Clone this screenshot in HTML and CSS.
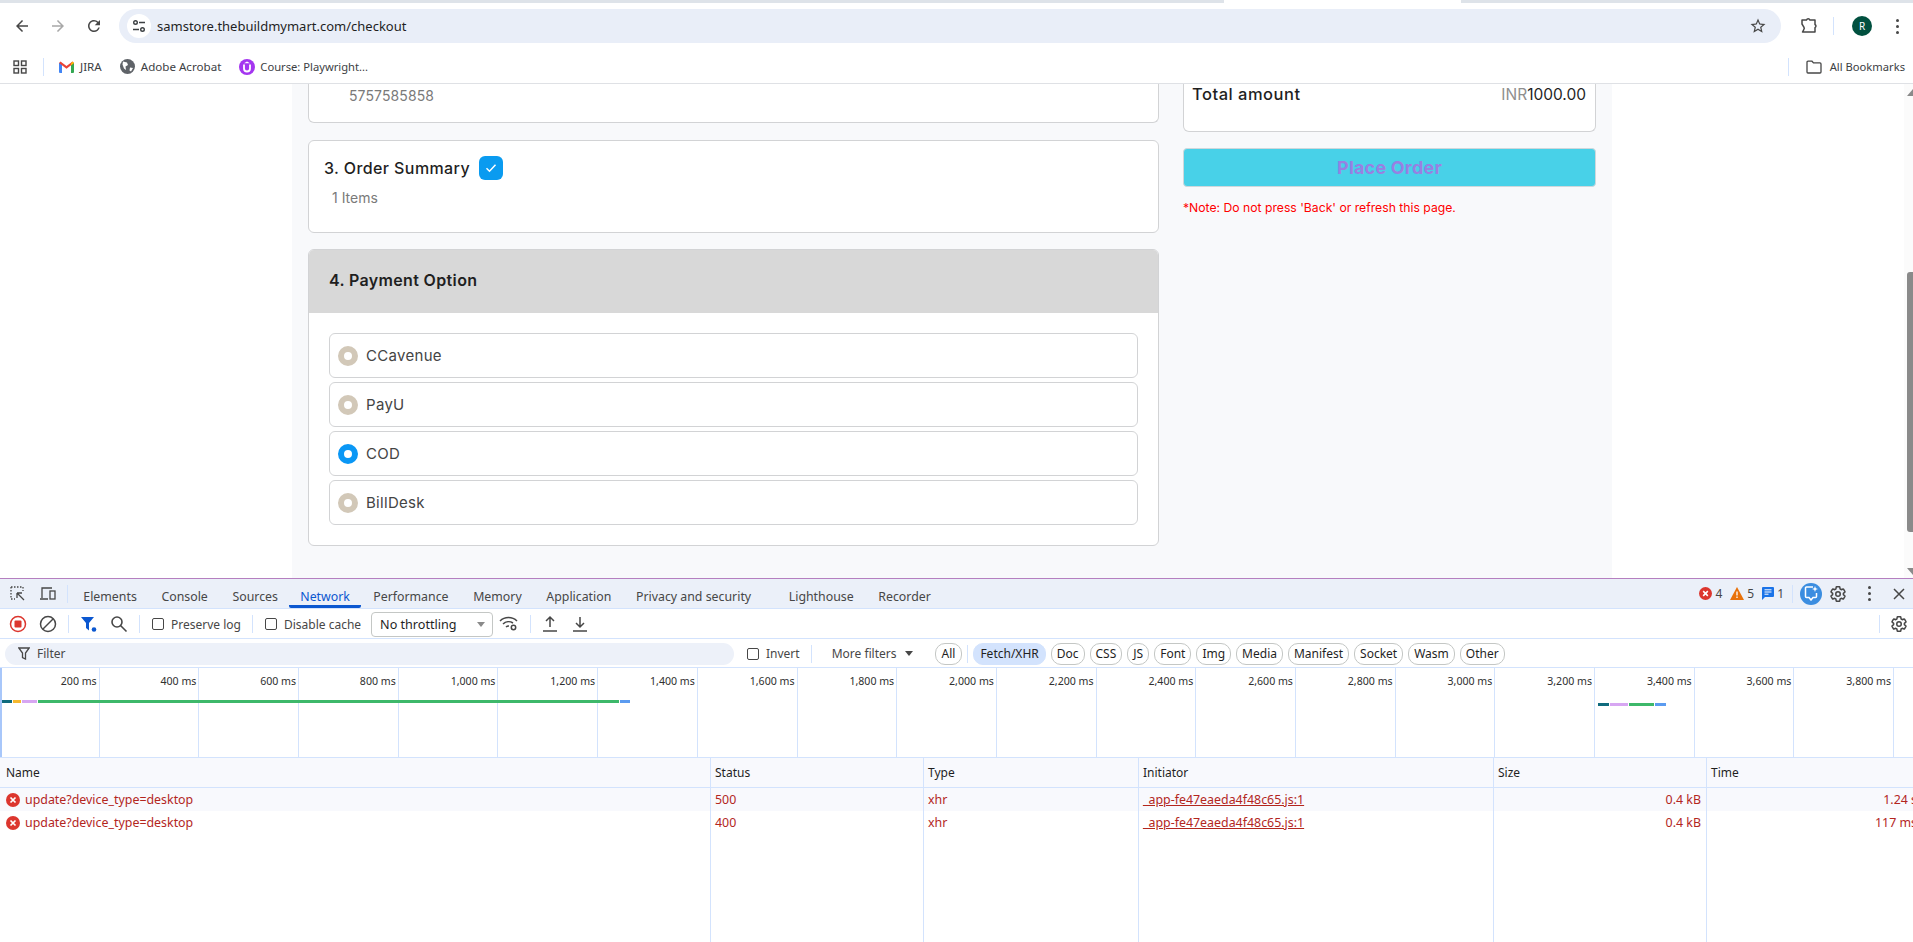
FILE: index.html
```html
<!doctype html>
<html lang="en">
<head>
<meta charset="UTF-8">
<title>Checkout</title>
<link rel="stylesheet" href="styles.css">
</head>
<body>
<svg class="defs" width="0" height="0">
  <symbol id="gear" viewBox="0 0 24 24">
    <path fill="none" stroke="currentColor" stroke-width="2" stroke-linejoin="round" d="M19.14 12.94c.04-.3.06-.61.06-.94 0-.32-.02-.64-.07-.94l2.03-1.58a.49.49 0 0 0 .12-.61l-1.92-3.32a.488.488 0 0 0-.59-.22l-2.39.96c-.5-.38-1.03-.7-1.62-.94l-.36-2.54a.484.484 0 0 0-.48-.41h-3.84c-.24 0-.43.17-.47.41l-.36 2.54c-.59.24-1.13.57-1.62.94l-2.39-.96c-.22-.08-.47 0-.59.22L2.74 8.87c-.12.21-.08.47.12.61l2.03 1.58c-.05.3-.09.63-.09.94s.02.64.07.94l-2.03 1.58a.49.49 0 0 0-.12.61l1.92 3.32c.12.22.37.29.59.22l2.39-.96c.5.38 1.03.7 1.62.94l.36 2.54c.05.24.24.41.48.41h3.84c.24 0 .44-.17.47-.41l.36-2.54c.59-.24 1.13-.56 1.62-.94l2.39.96c.22.08.47 0 .59-.22l1.92-3.32c.12-.22.07-.47-.12-.61l-2.01-1.58z"/>
    <circle cx="12" cy="12" r="3" fill="none" stroke="currentColor" stroke-width="2"/>
  </symbol>
  <symbol id="err" viewBox="0 0 14 14">
    <circle cx="7" cy="7" r="7" fill="#dc362e"/>
    <path d="M4.500 4.500l5 5M9.500 4.500l-5 5" stroke="#fff" stroke-width="1.700"/>
  </symbol>
</svg>

<!-- browser top -->
<div class="tabstrip"><div class="tab-active"></div></div>
<div class="toolbar">
  <svg class="ic first" viewBox="0 0 24 24"><path d="M20 11H7.830l5.590-5.590L12 4l-8 8 8 8 1.410-1.410L7.830 13H20v-2z"/></svg>
  <svg class="ic muted" viewBox="0 0 24 24"><path d="M4 11h12.170l-5.590-5.590L12 4l8 8-8 8-1.410-1.410L16.170 13H4v-2z"/></svg>
  <svg class="ic" viewBox="0 0 24 24"><path d="M17.650 6.350A7.950 7.950 0 0 0 12 4c-4.420 0-7.990 3.580-7.990 8s3.570 8 7.990 8c3.730 0 6.840-2.550 7.730-6h-2.080A5.990 5.990 0 0 1 12 18c-3.310 0-6-2.690-6-6s2.690-6 6-6c1.660 0 3.140.690 4.220 1.780L13 11h7V4l-2.350 2.350z"/></svg>
  <div class="omnibox">
    <span class="site-info">
      <svg width="14" height="14" viewBox="0 0 14 14" fill="none" stroke="#3c4043" stroke-width="1.400"><circle cx="3.500" cy="3.500" r="1.800"/><path d="M7 3.500h6M1 10.500h6"/><circle cx="10.500" cy="10.500" r="1.800"/></svg>
    </span>
    <span class="url">samstore.thebuildmymart.com/checkout</span>
    <svg class="star" viewBox="0 0 24 24"><path d="M22 9.240l-7.190-.620L12 2 9.190 8.630 2 9.240l5.460 4.730L5.820 21 12 17.270 18.180 21l-1.630-7.030L22 9.240zM12 15.400l-3.760 2.270 1-4.280-3.320-2.880 4.380-.380L12 6.100l1.710 4.040 4.380.380-3.320 2.880 1 4.280L12 15.400z"/></svg>
  </div>
  <svg class="ext" width="18" height="18" viewBox="0 0 18 18" fill="none" stroke="#474747" stroke-width="1.500" stroke-linejoin="round"><path d="M2 3h4.500a1.800 1.800 0 0 1 3.400 0H15v4.500a1.800 1.800 0 0 1 0 3.200V15H2.500l1.200-2.200a2.400 2.400 0 0 0 0-3L2 7z"/></svg>
  <span class="tb-sep"></span>
  <span class="avatar">R</span>
  <span class="dots"><i></i><i></i><i></i></span>
</div>
<div class="bookmarks">
  <svg class="apps" width="14" height="14" viewBox="0 0 14 14" fill="none" stroke="#474747" stroke-width="1.400"><rect x="1" y="1" width="4.500" height="4.500"/><rect x="8.500" y="1" width="4.500" height="4.500"/><rect x="1" y="8.500" width="4.500" height="4.500"/><rect x="8.500" y="8.500" width="4.500" height="4.500"/></svg>
  <span class="bm-sep"></span>
  <span class="bm">
    <svg width="15" height="12" viewBox="0 0 15 12"><path d="M0 2h3v10H1a1 1 0 0 1-1-1z" fill="#4285f4"/><path d="M12 2h3v9a1 1 0 0 1-1 1h-2z" fill="#34a853"/><path d="M0 2l1.500-1.600L7.500 5l6-4.600L15 2l-7.500 5.800z" fill="#ea4335"/><path d="M12 2.400l1.500-2L15 2l-3 2.400z" fill="#fbbc04"/></svg>
    JIRA
  </span>
  <span class="bm bm-acrobat">
    <svg width="15" height="15" viewBox="0 0 15 15"><circle cx="7.500" cy="7.500" r="7.500" fill="#5f6368"/><path d="M3 2.500l4 1 1 2.500-2.500 1.500L6 11l-2-1.500-1.500-4zM10 8.500l3 .5-2 3.500-1.500-1z" fill="#fff"/></svg>
    Adobe Acrobat
  </span>
  <span class="bm bm-course">
    <svg width="16" height="16" viewBox="0 0 16 16"><circle cx="8" cy="8" r="8" fill="#a435f0"/><path d="M5 5.500v4a3 3 0 0 0 6 0v-4" fill="none" stroke="#fff" stroke-width="1.800"/><path d="M8 2.500l3 1.700H5z" fill="#fff"/></svg>
    Course: Playwright...
  </span>
  <span class="bm-right">
    <span class="bm-sep"></span>
    <svg width="16" height="14" viewBox="0 0 16 14" fill="none" stroke="#474747" stroke-width="1.300"><path d="M1 2.200a1 1 0 0 1 1-1h4l1.500 1.700H14a1 1 0 0 1 1 1V12a1 1 0 0 1-1 1H2a1 1 0 0 1-1-1z"/></svg>
    All Bookmarks
  </span>
</div>

<!-- checkout page -->
<div class="page">
  <div class="panel">
    <div class="left-col">
      <div class="card card-cut"><div class="phone">5757585858</div></div>
      <div class="card card-summary">
        <div class="sec-title">
          3. Order Summary
          <span class="check">
            <svg width="12" height="10" viewBox="0 0 12 10" fill="none" stroke="#fff" stroke-width="1.500"><path d="M1.500 5.200l3 3 6-6.500"/></svg>
          </span>
        </div>
        <div class="items">1 Items</div>
      </div>
      <div class="card card-pay">
        <div class="pay-head">4. Payment Option</div>
        <div class="pay-list">
          <label class="pay-row"><span class="radio"></span>CCavenue</label>
          <label class="pay-row"><span class="radio"></span>PayU</label>
          <label class="pay-row"><span class="radio on"></span>COD</label>
          <label class="pay-row"><span class="radio"></span>BillDesk</label>
        </div>
      </div>
    </div>
    <div class="right-col">
      <div class="card total-card">
        <span class="total-label">Total amount</span>
        <span class="total-value"><span class="inr">INR</span>1000.00</span>
      </div>
      <button class="place">Place Order</button>
      <div class="note">*Note: Do not press 'Back' or refresh this page.</div>
    </div>
  </div>
  <div class="scrollbar">
    <span class="sb-up"></span>
    <span class="sb-thumb"></span>
    <span class="sb-down"></span>
  </div>
</div>

<!-- devtools -->
<div class="devtools">
  <div class="dt-tabs">
    <svg class="dt-ic dt-first" viewBox="0 0 18 18" fill="none" stroke="#474747" stroke-width="1.300"><path d="M2 2h12M2 2v12M14 2v4M2 14h4" stroke-dasharray="1.500 1.500"/><path d="M8 8l7 7M8 8v5M8 8h5"/></svg>
    <svg class="dt-ic" viewBox="0 0 18 18" fill="none" stroke="#474747" stroke-width="1.300"><path d="M3 13V3h10M1 14h8"/><rect x="11" y="6" width="5" height="8"/></svg>
    <span class="dt-sep"></span>
    <span class="dt-tab">Elements</span>
    <span class="dt-tab">Console</span>
    <span class="dt-tab">Sources</span>
    <span class="dt-tab active">Network</span>
    <span class="dt-tab">Performance</span>
    <span class="dt-tab">Memory</span>
    <span class="dt-tab">Application</span>
    <span class="dt-tab dt-privacy">Privacy and security</span>
    <span class="dt-tab">Lighthouse</span>
    <span class="dt-tab">Recorder</span>
    <div class="dt-status">
      <svg width="13" height="13"><use href="#err"/></svg><span class="st-num">4</span>
      <svg width="14" height="13" viewBox="0 0 14 13"><path d="M7 0l7 13H0z" fill="#e8710a"/><path d="M7 4.500v4M7 9.500v1.500" stroke="#fff" stroke-width="1.300"/></svg><span class="st-num">5</span>
      <svg width="12" height="13" viewBox="0 0 12 13"><path d="M0 1a1 1 0 0 1 1-1h10a1 1 0 0 1 1 1v8a1 1 0 0 1-1 1H3l-3 3z" fill="#1a73e8"/><path d="M2.500 2.800h7M2.500 5h7M2.500 7.200h4" stroke="#fff"/></svg><span class="st-num">1</span>
      <span class="dt-sep"></span>
      <span class="ai-btn">
        <svg width="14" height="15" viewBox="0 0 14 15" fill="none"><path d="M9 1H2.500a1 1 0 0 0-1 1v8.500a1 1 0 0 0 1 1H5L7 14l2-2.500h2.500a1 1 0 0 0 1-1V7" stroke="#fff" stroke-width="1.500"/><path d="M11 0l.8 2.200L14 3l-2.200.8L11 6l-.8-2.200L8 3l2.200-.8z" fill="#fff"/></svg>
      </span>
      <svg class="st-gear" width="18" height="18"><use href="#gear"/></svg>
      <span class="dots dots-dt"><i></i><i></i><i></i></span>
      <svg class="st-close" width="12" height="12" viewBox="0 0 12 12" stroke="#474747" stroke-width="1.500"><path d="M1 1l10 10M11 1L1 11"/></svg>
    </div>
  </div>

  <div class="dt-tools">
    <svg class="tool" width="18" height="18" viewBox="0 0 18 18"><circle cx="9" cy="9" r="7.500" fill="none" stroke="#dc362e" stroke-width="1.500"/><rect x="5.500" y="5.500" width="7" height="7" rx="1" fill="#dc362e"/></svg>
    <svg class="tool" width="18" height="18" viewBox="0 0 18 18" fill="none" stroke="#474747" stroke-width="1.500"><circle cx="9" cy="9" r="7.500"/><path d="M14 4L4 14"/></svg>
    <span class="dt-sep"></span>
    <svg class="tool" width="18" height="18" viewBox="0 0 18 18" fill="#0b57d0"><path d="M1 2h13l-5 6v7.500L6 13V8z"/><circle cx="14" cy="14.500" r="2.300"/></svg>
    <svg class="tool" width="18" height="18" viewBox="0 0 18 18" fill="none" stroke="#474747" stroke-width="1.600"><circle cx="7" cy="7" r="5"/><path d="M10.500 10.500l6 6"/></svg>
    <span class="dt-sep sep-before-log"></span>
    <label class="cb"><span class="box"></span>Preserve log</label>
    <span class="dt-sep sep-after-log"></span>
    <label class="cb"><span class="box"></span>Disable cache</label>
    <span class="select">No throttling<i class="caret"></i></span>
    <svg class="tool" width="20" height="16" viewBox="0 0 20 16" fill="none" stroke="#474747" stroke-width="1.500"><path d="M1 5a12 12 0 0 1 17 0M4 8a8 8 0 0 1 10-1M7 11a4 4 0 0 1 3-1"/><circle cx="14.500" cy="11.500" r="2.200"/></svg>
    <span class="dt-sep"></span>
    <svg class="tool tool-up" width="16" height="18" viewBox="0 0 16 18" fill="none" stroke="#474747" stroke-width="1.500"><path d="M8 12V2M4 6l4-4 4 4M1 16h14"/></svg>
    <svg class="tool" width="16" height="18" viewBox="0 0 16 18" fill="none" stroke="#474747" stroke-width="1.500"><path d="M8 2v10M4 8l4 4 4-4M1 16h14"/></svg>
    <span class="tools-right">
      <span class="dt-sep"></span>
      <svg width="18" height="18"><use href="#gear"/></svg>
    </span>
  </div>

  <div class="dt-filter">
    <div class="filter-input">
      <svg width="12" height="13" viewBox="0 0 12 13" fill="none" stroke="#474747" stroke-width="1.300"><path d="M.8 1h10.400L7.500 6v6L4.500 10.500V6z"/></svg>
      Filter
    </div>
    <label class="cb cb-invert"><span class="box"></span>Invert</label>
    <span class="dt-sep"></span>
    <span class="more">More filters<i class="caret dark"></i></span>
    <span class="chip chip-wide">All</span>
    <span class="dt-sep chip-sep"></span>
    <span class="chip chip-wide selected">Fetch/XHR</span>
    <span class="chip">Doc</span>
    <span class="chip">CSS</span>
    <span class="chip">JS</span>
    <span class="chip">Font</span>
    <span class="chip">Img</span>
    <span class="chip">Media</span>
    <span class="chip">Manifest</span>
    <span class="chip">Socket</span>
    <span class="chip">Wasm</span>
    <span class="chip">Other</span>
  </div>

  <div class="overview">
    <div class="tick">200 ms</div><div class="tick">400 ms</div><div class="tick">600 ms</div><div class="tick">800 ms</div>
    <div class="tick">1,000 ms</div><div class="tick">1,200 ms</div><div class="tick">1,400 ms</div><div class="tick">1,600 ms</div>
    <div class="tick">1,800 ms</div><div class="tick">2,000 ms</div><div class="tick">2,200 ms</div><div class="tick">2,400 ms</div>
    <div class="tick">2,600 ms</div><div class="tick">2,800 ms</div><div class="tick">3,000 ms</div><div class="tick">3,200 ms</div>
    <div class="tick">3,400 ms</div><div class="tick">3,600 ms</div><div class="tick">3,800 ms</div>
    <span class="handle"></span>
    <div class="bars bars-one">
      <i class="teal" style="width:10px"></i><i class="yellow" style="width:8px"></i><i class="lilac" style="width:15px"></i><i class="green" style="width:581px"></i><i class="blue" style="width:10px"></i>
    </div>
    <div class="bars bars-two">
      <i class="teal" style="width:11px"></i><i class="lilac" style="width:18px"></i><i class="green" style="width:25px"></i><i class="blue" style="width:11px"></i>
    </div>
  </div>

  <div class="table">
    <div class="col col-name">
      <div class="th">Name</div>
      <div class="td alt"><svg width="14" height="14"><use href="#err"/></svg>update?device_type=desktop</div>
      <div class="td"><svg width="14" height="14"><use href="#err"/></svg>update?device_type=desktop</div>
    </div>
    <div class="col col-status">
      <div class="th">Status</div>
      <div class="td alt">500</div>
      <div class="td">400</div>
    </div>
    <div class="col col-type">
      <div class="th">Type</div>
      <div class="td alt">xhr</div>
      <div class="td">xhr</div>
    </div>
    <div class="col col-init">
      <div class="th">Initiator</div>
      <div class="td alt"><u>_app-fe47eaeda4f48c65.js:1</u></div>
      <div class="td"><u>_app-fe47eaeda4f48c65.js:1</u></div>
    </div>
    <div class="col col-size">
      <div class="th">Size</div>
      <div class="td alt num">0.4 kB</div>
      <div class="td num">0.4 kB</div>
    </div>
    <div class="col col-time">
      <div class="th">Time</div>
      <div class="td alt num">1.24 s</div>
      <div class="td num">117 ms</div>
    </div>
  </div>
</div>
</body>
</html>
```

FILE: styles.css
```css
* {
box-sizing: border-box;
}

html, body {
margin: 0;
height: 942px;
overflow: hidden;
}

body {
display: flex;
flex-direction: column;
width: 1913px;
background: #fff;
font-family: "Noto Sans", sans-serif;
color: #1f1f1f;
}

.defs {
position: absolute;
}

/* browser top */
.tabstrip {
height: 3px;
flex: none;
background: #dee3e9;
padding-left: 1224px;
}

.tab-active {
width: 237px;
height: 3px;
background: #fff;
}

.toolbar {
height: 47px;
flex: none;
display: flex;
align-items: center;
padding-bottom: 1px;
}

.ic {
width: 18px;
height: 18px;
fill: #474747;
margin-right: 18px;
}

.ic.first {
margin-left: 13px;
}

.ic.muted {
fill: #a8a8a8;
}

.omnibox {
width: 1662px;
height: 34px;
margin-left: -2px;
border-radius: 17px;
background: #e9eef8;
display: flex;
align-items: center;
padding: 0 14px 0 8px;
}

.site-info {
width: 24px;
height: 24px;
border-radius: 50%;
background: #fff;
display: flex;
align-items: center;
justify-content: center;
margin-right: 6px;
}

.url {
font-size: 13px;
color: #1f1f1f;
}

.star {
width: 18px;
height: 18px;
fill: #474747;
margin-left: auto;
}

.ext {
margin-left: 19px;
}

.tb-sep {
width: 1px;
height: 18px;
background: #d3e3fd;
margin-left: 15px;
}

.avatar {
width: 20px;
height: 20px;
margin-left: 18px;
border-radius: 50%;
background: #01503f;
color: #fff;
font-size: 10px;
display: flex;
align-items: center;
justify-content: center;
}

.dots {
display: flex;
flex-direction: column;
gap: 3px;
margin-left: 24px;
}

.dots i {
width: 3px;
height: 3px;
border-radius: 50%;
background: #474747;
}

.bookmarks {
height: 34px;
flex: none;
display: flex;
align-items: center;
border-bottom: 1px solid #dfe1e5;
font-size: 11.6px;
color: #3c4043;
padding-left: 13px;
}

.bm-sep {
width: 1px;
height: 18px;
background: #d3e3fd;
margin-left: 16px;
}

.bm {
display: flex;
align-items: center;
gap: 6px;
margin-left: 15px;
}

.bm-acrobat {
margin-left: 18px;
}

.bm-course {
margin-left: 18px;
font-size: 11.2px;
gap: 5px;
}

.bm-right {
margin-left: auto;
display: flex;
align-items: center;
gap: 8px;
padding-right: 8px;
font-size: 11.2px;
}

.bm-right .bm-sep {
margin: 0 9px 0 0;
}

/* checkout page */
.page {
height: 494px;
flex: none;
display: flex;
background: #fff;
overflow: hidden;
font-family: Inter, sans-serif;
}

.panel {
width: 1320px;
margin-left: 292px;
background: #f8f9fb;
display: flex;
gap: 24px;
padding-left: 16px;
}

.left-col {
width: 851px;
flex: none;
}

.right-col {
width: 413px;
flex: none;
}

.card {
background: #fff;
border: 1px solid #d2d3d5;
border-radius: 6px;
}

.card-cut {
height: 39px;
border-top: 0;
border-radius: 0 0 6px 6px;
padding: 1px 0 0 40px;
}

.phone {
font-size: 14px;
line-height: 21px;
color: #7a7a7a;
letter-spacing: .1px;
}

.card-summary {
height: 93px;
margin-top: 17px;
padding: 15px 0 0 15px;
}

.sec-title {
display: flex;
align-items: center;
gap: 9px;
font-size: 16px;
letter-spacing: .4px;
font-weight: 500;
height: 24px;
}

.check {
width: 24px;
height: 24px;
border-radius: 6px;
background: #0a9bf0;
display: flex;
align-items: center;
justify-content: center;
}

.items {
font-size: 14px;
color: #7a7a7a;
margin: 9px 0 0 8px;
}

.card-pay {
height: 297px;
margin-top: 16px;
overflow: hidden;
}

.pay-head {
height: 63px;
background: #d8d8d8;
padding-left: 20px;
font-size: 16px;
letter-spacing: .35px;
font-weight: 600;
line-height: 61px;
}

.pay-list {
display: flex;
flex-direction: column;
gap: 4px;
padding: 20px 20px 0;
}

.pay-row {
height: 45px;
border: 1px solid #d2d3d5;
border-radius: 6px;
display: flex;
align-items: center;
gap: 8px;
padding-left: 8px;
font-size: 15px;
letter-spacing: .3px;
color: #444;
}

.radio {
width: 20px;
height: 20px;
border-radius: 50%;
border: 6px solid #d2c8b8;
background: #fff;
}

.radio.on {
border-color: #0a97f5;
}

.total-card {
height: 48px;
border-top: 0;
border-radius: 0 0 6px 6px;
display: flex;
justify-content: space-between;
padding: 0 9px 0 8px;
line-height: 21px;
}

.total-label {
font-size: 16.5px;
font-weight: 500;
letter-spacing: .5px;
}

.total-value {
font-size: 15.5px;
}

.inr {
color: #8f8f8f;
}

.place {
display: block;
width: 100%;
height: 39px;
margin-top: 16px;
border: 1px solid #cfd8dc;
border-radius: 4px;
background: #48d1e8;
color: #9880e2;
font-family: inherit;
font-size: 18px;
letter-spacing: .2px;
font-weight: 700;
}

.note {
margin-top: 13px;
font-size: 12.2px;
color: #f00;
}

.scrollbar {
width: 9px;
margin-left: auto;
position: relative;
background: #fbfbfb;
}

.sb-up, .sb-down, .sb-thumb {
position: absolute;
right: 0;
}

.sb-up {
top: 5px;
width: 6px;
height: 7px;
background: #8a8a8a;
clip-path: polygon(100% 0, 100% 100%, 0 100%);
}

.sb-down {
top: 484px;
width: 6px;
height: 7px;
background: #8a8a8a;
clip-path: polygon(0 0, 100% 0, 100% 100%);
}

.sb-thumb {
top: 188px;
width: 6px;
height: 260px;
background: #8a8a8a;
border-radius: 3px 0 0 3px;
}

/* devtools */
.devtools {
flex: 1;
border-top: 1px solid #b57fc0;
font-size: 12px;
color: #474747;
min-height: 0;
}

.dt-sep {
width: 1px;
height: 18px;
background: #d3e3fd;
flex: none;
}

.dt-tabs {
height: 30px;
background: #ebf0f9;
border-bottom: 1px solid #d3e3fd;
display: flex;
align-items: center;
}

.dt-ic {
width: 18px;
height: 18px;
margin-right: 12px;
}

.dt-first {
margin-left: 9px;
}

.dt-tabs > .dt-sep {
margin: 0 3px 0 -2px;
}

.dt-tab {
height: 29px;
font-size: 12.35px;
line-height: 35px;
padding: 0 12.3px;
white-space: nowrap;
}

.dt-tab.active {
color: #0b57d0;
padding: 0 11px;
margin: 0 0 0 -1px;
border-bottom: 3px solid #0b57d0;
border-radius: 2px;
}

.dt-privacy {
margin-right: 13px;
}

.dt-status {
margin-left: auto;
display: flex;
align-items: center;
gap: 3px;
padding-right: 8px;
}

.st-num {
margin-right: 5px;
}

.dt-status .dt-sep {
margin: 0 4px 0 0;
}

.ai-btn {
width: 22px;
height: 22px;
border-radius: 50%;
background: #3b8de0;
display: flex;
align-items: center;
justify-content: center;
}

.st-gear {
margin-left: 4px;
}

.dots-dt {
margin-left: 18px;
}

.st-close {
margin-left: 19px;
}

.dt-tools {
height: 30px;
border-bottom: 1px solid #d3e3fd;
display: flex;
align-items: center;
padding: 1px 0 0 9px;
}

.tool {
margin-right: 12px;
flex: none;
}

.tool-up {
margin-right: 14px;
}

.dt-tools > .dt-sep {
margin: 0 11px 0 -1px;
}

.dt-tools > .sep-before-log {
margin-right: 12px;
}

.dt-tools > .sep-after-log {
margin: 0 12px 0 11px;
}

.cb {
display: flex;
align-items: center;
gap: 7px;
white-space: nowrap;
}

.box {
width: 12px;
height: 12px;
border: 1px solid #474747;
border-radius: 2px;
background: #fff;
}

.select {
width: 122px;
height: 25px;
margin: 0 6px 0 10px;
border: 1px solid #c4c7c5;
border-radius: 4px;
display: flex;
align-items: center;
justify-content: space-between;
padding: 0 7px 0 8px;
color: #1f1f1f;
font-size: 12.6px;
}

.caret {
width: 0;
height: 0;
border-left: 4px solid transparent;
border-right: 4px solid transparent;
border-top: 5px solid #8a8a8a;
}

.caret.dark {
border-top-color: #474747;
margin-left: 8px;
}

.tools-right {
margin-left: auto;
display: flex;
align-items: center;
gap: 10px;
padding-right: 5px;
}

.dt-filter {
height: 29px;
border-bottom: 1px solid #d3e3fd;
display: flex;
align-items: center;
padding: 1px 0 0 5px;
gap: 5px;
}

.filter-input {
width: 729px;
height: 22px;
border-radius: 11px;
background: #edf1f9;
display: flex;
align-items: center;
gap: 7px;
padding-left: 13px;
}

.cb-invert {
margin-left: 8px;
}

.dt-filter > .dt-sep {
margin-left: 6px;
}

.more {
display: flex;
align-items: center;
margin: 0 17px 0 15px;
white-space: nowrap;
}

.chip {
height: 22px;
border: 1px solid #c4c7c5;
border-radius: 10px;
padding: 0 5px;
font-size: 12px;
line-height: 19px;
color: #1f1f1f;
white-space: nowrap;
}

.chip-wide {
padding: 0 6px;
}

.dt-filter > .chip-sep {
margin: 0;
}

.chip.selected {
background: #d3e3fd;
border-color: #d3e3fd;
}

.overview {
height: 90px;
display: flex;
position: relative;
border-bottom: 1px solid #d3e3fd;
font-size: 10.6px;
}

.tick {
width: 99.7px;
flex: none;
border-right: 1px solid #d3e3fd;
text-align: right;
padding: 6px 2px 0 0;
color: #303030;
}

.handle {
position: absolute;
left: 0;
top: 0;
width: 2px;
height: 89px;
background: #a8c7fa;
}

.bars {
position: absolute;
display: flex;
gap: 1px;
height: 3px;
}

.bars i {
display: block;
height: 3px;
}

.bars-one {
left: 2px;
top: 32px;
}

.bars-two {
left: 1598px;
top: 35px;
}

.teal {
background: #0f6b7d;
}

.yellow {
background: #f5b82e;
}

.lilac {
background: #d7a6f2;
}

.green {
background: #3db86a;
}

.blue {
background: #5b9bf0;
}

.table {
display: flex;
height: 184px;
overflow: hidden;
}

.col {
flex: none;
border-left: 1px solid #d3e3fd;
height: 100%;
}

.col-name {
width: 710px;
border-left: 0;
}

.col-status {
width: 213px;
}

.col-type {
width: 215px;
}

.col-init {
width: 355px;
}

.col-size {
width: 213px;
}

.col-time {
width: 216px;
}

.th {
height: 30px;
line-height: 29px;
padding-left: 4px;
background: #f8f9fd;
border-bottom: 1px solid #d3e3fd;
color: #1f1f1f;
}

.col-name .th {
padding-left: 6px;
}

.td {
height: 23px;
line-height: 23px;
padding: 0 5px 0 4px;
font-size: 12.4px;
color: #b3261e;
display: flex;
align-items: center;
gap: 5px;
white-space: nowrap;
}

.td.alt {
background: #f8f9fd;
}

.td.num {
justify-content: flex-end;
}

.col-name .td {
padding-left: 6px;
}
```
